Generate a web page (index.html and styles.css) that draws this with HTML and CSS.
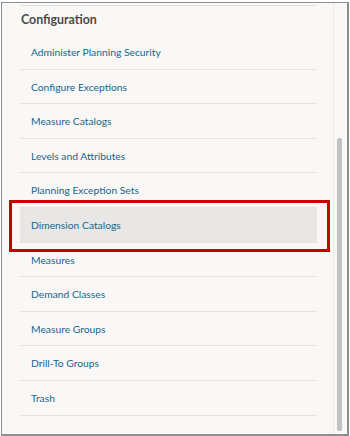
FILE: index.html
```html
<!DOCTYPE html>
<html lang="en">
<head>
    <meta charset="UTF-8">
    <title>Configuration</title>
    <link rel="stylesheet" href="styles.css">
</head>
<body>
    <div class="frame">
        <div class="panel">
            <div class="section">
                <h2 class="section-title">Configuration</h2>
                <ul class="nav-list">
                    <li class="nav-item"><a href="#">Administer Planning Security</a></li>
                    <li class="nav-item"><a href="#">Configure Exceptions</a></li>
                    <li class="nav-item"><a href="#">Measure Catalogs</a></li>
                    <li class="nav-item"><a href="#">Levels and Attributes</a></li>
                    <li class="nav-item"><a href="#">Planning Exception Sets</a></li>
                    <!-- selected row, called out with the red box -->
                    <li class="nav-item selected"><a href="#">Dimension Catalogs</a><span class="callout"></span></li>
                    <li class="nav-item"><a href="#">Measures</a></li>
                    <li class="nav-item"><a href="#">Demand Classes</a></li>
                    <li class="nav-item"><a href="#">Measure Groups</a></li>
                    <li class="nav-item"><a href="#">Drill-To Groups</a></li>
                    <li class="nav-item"><a href="#">Trash</a></li>
                </ul>
            </div>
            <!-- fake scrollbar -->
            <div class="scrollbar">
                <div class="thumb"></div>
            </div>
        </div>
    </div>
</body>
</html>
```

FILE: styles.css
```css
body, html {
    margin: 0;
    background: #ffffff;
    font-family: 'Lato', 'Liberation Sans', sans-serif;
}
/* Grey frame round the whole panel */
.frame {
    width: 345px;
    height: 431px;
    margin: 2px 0 0 1px;
    border: 1px solid #8e8e8e;
    border-width: 1px 2px 2px 1px;
    background: #f9f8f6;
}
.panel {
    display: flex;
    height: 100%;
}
.section {
    flex: 1;
    padding: 2px 16px 0 18px;
}
.section-title {
    margin: 0;
    height: 29px;
    line-height: 28px;
    padding-left: 1px;
    border-top: 1px solid #e3e2e0;
    font-size: 12.4px;
    font-weight: bold;
    color: #4a4a4a;
}
.nav-list {
    list-style: none;
    margin: 0;
    padding: 0;
}
.nav-item {
    position: relative;
    height: 32.6px;
    padding-top: 1px;
    line-height: 33.6px;
    border-bottom: 1px solid #e3e2e0;
    padding-left: 11px;
    font-size: 10.3px;
}
.nav-item a {
    color: #17668b;
    text-decoration: none;
}
.nav-item.selected {
    background: #e8e7e5;
}
/* Red annotation box drawn over the selected row */
.callout {
    position: absolute;
    left: -11px;
    right: -13px;
    top: -8px;
    bottom: -10px;
    border: 3px solid #c40000;
}
.scrollbar {
    width: 10px;
    border-left: 1px solid #ecebe9;
    padding: 135px 0 3px 3px;
}
.thumb {
    width: 5px;
    height: 293px;
    background: #c2c2c2;
    border-radius: 2px;
}
```
